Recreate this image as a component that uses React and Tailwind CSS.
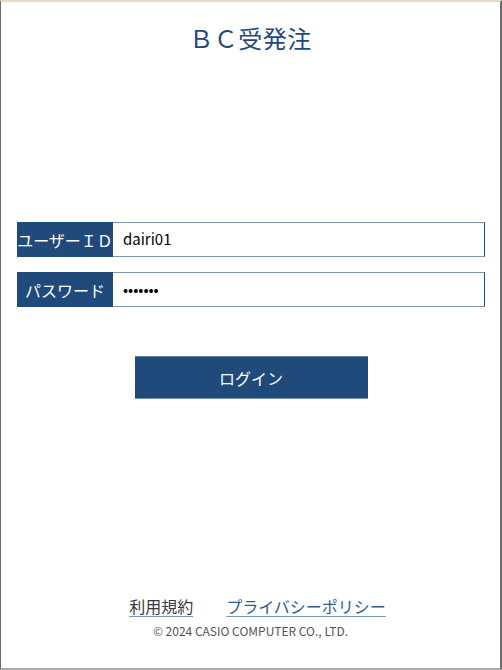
import { useState } from "react";

const font = { fontFamily: '"Noto Sans CJK JP", "Noto Sans", sans-serif' };

export default function App() {
  const [userId, setUserId] = useState("dairi01");
  const [password, setPassword] = useState("1234567");

  return (
    <div
      style={font}
      className="w-[502px] h-[670px] bg-white border-t-2 border-t-[#e3d9cc] border-l border-l-[#6b6b6b] border-r-2 border-r-[#6b6b6b] border-b-2 border-b-[#a8a8a8] flex flex-col"
    >
      <h1 className="text-center text-[24px] leading-[36px] text-[#1f4a7a] tracking-[0.02em] mt-[18px]">
        ＢＣ受発注
      </h1>

      <form className="mt-[166px] pl-4 pr-[15px] flex flex-col gap-[15px]" onSubmit={(e) => e.preventDefault()}>
        <div className="flex h-[35px]">
          <label className="w-[96px] shrink-0 bg-[#1f4a7a] text-white text-[16px] flex items-center justify-center whitespace-nowrap">
            ユーザーＩＤ
          </label>
          <input
            value={userId}
            onChange={(e) => setUserId(e.target.value)}
            className="flex-1 min-w-0 border-y border-y-[#7d95b0] border-r border-r-[#1f4a7a] px-[10px] text-[15px] text-black outline-none"
          />
        </div>
        <div className="flex h-[35px]">
          <label className="w-[96px] shrink-0 bg-[#1f4a7a] text-white text-[16px] flex items-center justify-center whitespace-nowrap">
            パスワード
          </label>
          <input
            type="password"
            value={password}
            onChange={(e) => setPassword(e.target.value)}
            className="flex-1 min-w-0 border-y border-y-[#7d95b0] border-r border-r-[#1f4a7a] px-[10px] text-[15px] text-black outline-none"
          />
        </div>

        <div className="flex justify-center mt-[34px]">
          <button
            type="submit"
            className="w-[233px] h-[43px] bg-[#1f4a7a] text-white text-[16px] border-t border-t-[#5f7fa3] border-b border-b-[#6f8cad]"
          >
            ログイン
          </button>
        </div>
      </form>

      <div className="mt-auto mb-[29px] flex flex-col items-center">
        <div className="flex gap-[33px] text-[16px] leading-[24px] pl-[14px]">
          <a href="#" className="text-[#3a3a3a] underline decoration-[#7d95b0] underline-offset-[3px]">
            利用規約
          </a>
          <a href="#" className="text-[#2f5a8a] underline decoration-[#7d95b0] underline-offset-[3px]">
            プライバシーポリシー
          </a>
        </div>
        <p className="mt-[5px] text-[12px] leading-[16px] text-[#555]">© 2024 CASIO COMPUTER CO., LTD.</p>
      </div>
    </div>
  );
}
